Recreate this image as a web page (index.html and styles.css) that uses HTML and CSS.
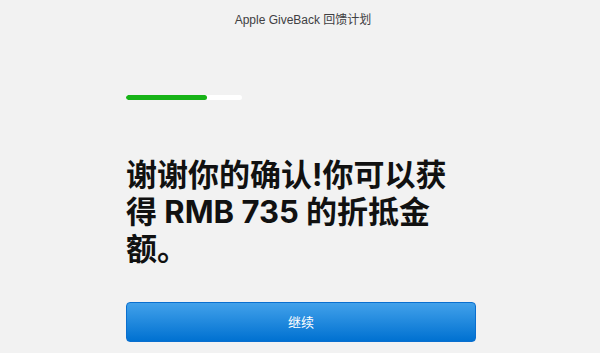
FILE: index.html
```html
<!DOCTYPE html>
<html lang="zh-CN">

<head>
    <meta charset="UTF-8" />
    <meta name="viewport" content="width=device-width, initial-scale=1.0" />
    <title>Apple GiveBack 回馈计划</title>

    <link rel="stylesheet" href="styles.css">
</head>

<body>
    <header class="top-bar">Apple GiveBack 回馈计划</header>

    <main class="page">
        <div class="progress">
            <div class="progress-fill" style="width: 70%"></div>
        </div>

        <h1 class="headline">谢谢你的确认!你可以获得 RMB 735 的折抵金额。</h1>

        <button type="button" class="continue-btn">继续</button>
    </main>
</body>

</html>
```

FILE: styles.css
```css
body {
    font-family: Inter, "Noto Sans CJK SC", sans-serif;
    margin: 0;
    background-color: #f2f2f2;
    color: #1d1d1f;
}

.top-bar {
    height: 36px;
    display: flex;
    justify-content: center;
    align-items: center;
    padding-left: 6px;
    font-family: "Liberation Sans", "Noto Sans CJK SC", sans-serif;
    font-size: 12px;
    color: #404042;
}

.page {
    width: 350px;
    margin: 0 auto;
    padding-top: 59px;
    display: flex;
    flex-direction: column;
}

.progress {
    width: 116px;
    height: 5px;
    margin-left: 1px;
    background: #fff;
    border-radius: 3px;
    overflow: hidden;
}

.progress-fill {
    height: 100%;
    background: #17b317;
    border-radius: 3px;
}

.headline {
    margin: 56px 0 0 1px;
    width: 345px;
    font-size: 31px;
    line-height: 37px;
    font-weight: 700;
    color: #111;
}

.continue-btn {
    margin: 35px 0 0 1px;
    height: 40px;
    width: 350px;
    border: 1px solid #0a6fcf;
    border-radius: 4px;
    background: linear-gradient(#42a1ea, #0071d1);
    color: #fff;
    font-family: inherit;
    font-size: 13px;
    padding-bottom: 3px;
    cursor: pointer;
}
```
